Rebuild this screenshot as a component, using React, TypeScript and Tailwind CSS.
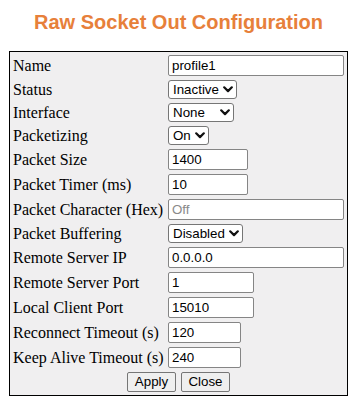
import { ReactNode } from "react";

type Field =
  | { label: string; kind: "input"; value: string; width: string; placeholder?: boolean }
  | { label: string; kind: "select"; value: string; width: string };

const fields: Field[] = [
  { label: "Name", kind: "input", value: "profile1", width: "w-full" },
  { label: "Status", kind: "select", value: "Inactive", width: "w-[69px]" },
  { label: "Interface", kind: "select", value: "None", width: "w-[66px]" },
  { label: "Packetizing", kind: "select", value: "On", width: "w-[41px]" },
  { label: "Packet Size", kind: "input", value: "1400", width: "w-[80px]" },
  { label: "Packet Timer (ms)", kind: "input", value: "10", width: "w-[80px]" },
  { label: "Packet Character (Hex)", kind: "input", value: "Off", width: "w-full", placeholder: true },
  { label: "Packet Buffering", kind: "select", value: "Disabled", width: "w-[75px]" },
  { label: "Remote Server IP", kind: "input", value: "0.0.0.0", width: "w-full" },
  { label: "Remote Server Port", kind: "input", value: "1", width: "w-[86px]" },
  { label: "Local Client Port", kind: "input", value: "15010", width: "w-[86px]" },
  { label: "Reconnect Timeout (s)", kind: "input", value: "120", width: "w-[73px]" },
  { label: "Keep Alive Timeout (s)", kind: "input", value: "240", width: "w-[73px]" },
];

const ctrlFont = "font-['Liberation_Sans',Arial,sans-serif] text-[13.33px]";

function Chevron() {
  return (
    <svg
      className="pointer-events-none absolute right-[4px] top-[6px]"
      width="10"
      height="7"
      viewBox="0 0 10 7"
      fill="none"
    >
      <path d="M1.2 1.3 5 5.1 8.8 1.3" stroke="#111" strokeWidth="2.2" strokeLinecap="round" strokeLinejoin="round" />
    </svg>
  );
}

function Control({ f }: { f: Field }): ReactNode {
  if (f.kind === "select") {
    return (
      <div className={`relative h-[19px] ${f.width}`}>
        <select
          defaultValue={f.value}
          className={`block h-[19px] w-full appearance-none rounded-[3px] border border-[#767676] bg-white py-0 pl-[4px] pr-[16px] leading-[17px] text-black ${ctrlFont}`}
        >
          <option>{f.value}</option>
        </select>
        <Chevron />
      </div>
    );
  }
  return (
    <input
      type="text"
      readOnly
      defaultValue={f.placeholder ? undefined : f.value}
      placeholder={f.placeholder ? f.value : undefined}
      className={`block h-[21px] rounded-[2px] border border-[#858585] bg-white px-[3px] text-black placeholder:text-[#8a8a8a] ${ctrlFont} ${f.width}`}
    />
  );
}

export default function App() {
  return (
    <div className="min-h-[402px] w-[355px] bg-white">
      <h1 className="pt-[11px] pl-[9px] w-[348px] text-center font-['Liberation_Sans',Arial,sans-serif] text-[20px] font-bold leading-[23px] text-[#e7803a]">
        Raw Socket Out Configuration
      </h1>
      <div className="mt-[17px] ml-[9px] w-[339px] border border-black bg-[#f0eff0] p-[2px]">
        <div className="flex flex-col gap-[2px]">
          {fields.map((f) => (
            <div key={f.label} className="grid grid-cols-[153px_1fr] items-center gap-x-[2px]">
              <div className="px-[1px] font-['Liberation_Serif','Times_New_Roman',serif] text-[16px] leading-[18px] whitespace-nowrap text-black">
                {f.label}
              </div>
              <div className="p-[1px]">
                <Control f={f} />
              </div>
            </div>
          ))}
          <div className="flex justify-center gap-[5px] py-[1px]">
            {["Apply", "Close"].map((b) => (
              <button
                key={b}
                className={`h-[20px] w-[49px] rounded-[2px] border border-[#767676] bg-[#efefef] leading-[18px] text-black ${ctrlFont}`}
              >
                {b}
              </button>
            ))}
          </div>
        </div>
      </div>
    </div>
  );
}
